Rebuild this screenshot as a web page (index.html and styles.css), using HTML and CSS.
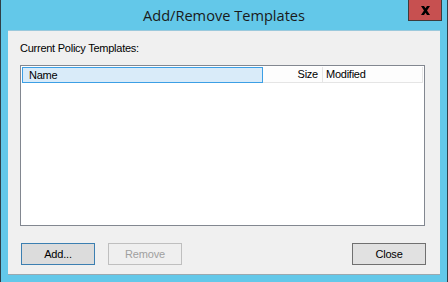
FILE: index.html
```html
<!DOCTYPE html>
<html>
<head>
<meta charset="utf-8">
<link rel="stylesheet" href="styles.css">
</head>
<body>
<div class="window">
  <div class="titlebar">
    <span></span>
    <div class="title">Add/Remove Templates</div>
    <div class="close"><svg width="11" height="9" viewBox="0 0 11 9"><path d="M1 0h3l1.5 2.2L7 0h3L7 4.5 10 9H7L5.5 6.8 4 9H1l3-4.5z" fill="#000"/></svg></div>
  </div>
  <div class="client">
    <div class="label">Current Policy Templates:</div>
    <div class="list">
      <div class="header">
        <div class="col name">Name</div>
        <div class="col size">Size</div>
        <div class="col modified">Modified</div>
        <div class="col rest"></div>
      </div>
    </div>
    <div class="buttons">
      <button class="btn default">Add...</button>
      <button class="btn disabled">Remove</button>
      <span class="spacer"></span>
      <button class="btn close-btn">Close</button>
    </div>
  </div>
</div>
</body>
</html>
```

FILE: styles.css
```css
html, body {
  margin: 0;
  padding: 0;
}
body {
  width: 448px;
  height: 282px;
  overflow: hidden;
  font-family: "Liberation Sans", Arial, sans-serif;
}
.window {
  box-sizing: border-box;
  width: 448px;
  height: 282px;
  background: #63c8e9;
  border-left: 1px solid #2f3f47;
  border-right: 1px solid #2f3f47;
  display: flex;
  flex-direction: column;
}
.titlebar {
  height: 30px;
  display: grid;
  grid-template-columns: 1fr auto 1fr;
  align-items: start;
}
.title {
  font-family: "Open Sans", "Noto Sans", sans-serif;
  font-size: 14.6px;
  line-height: 30px;
  color: #1a1a1a;
}
.close {
  justify-self: end;
  margin-right: 5px;
  width: 32px;
  height: 20px;
  background: #c75050;
  border: 1px solid #3c3c3c;
  border-top: none;
  display: flex;
  align-items: center;
  justify-content: center;
}
.client {
  margin: 0 7px;
  height: 245px;
  background: #f0f0f0;
  border-top: 1px solid #9bc9dc;
  border-bottom: 1px solid #9aa9b0;
  box-sizing: border-box;
  padding: 11px 15px 9px 12px;
  display: flex;
  flex-direction: column;
}
.label {
  font-size: 11px;
  line-height: 13px;
  letter-spacing: -0.25px;
  color: #000;
}
.list {
  margin-top: 10px;
  height: 162px;
  box-sizing: border-box;
  background: #fff;
  border: 1px solid #828790;
  padding: 1px;
}
.header {
  display: flex;
  height: 16px;
}
.col {
  box-sizing: border-box;
  font-size: 11px;
  line-height: 14px;
  letter-spacing: -0.25px;
  color: #000;
  background: #fdfdfd;
  border-right: 1px solid #e5e5e5;
  border-bottom: 1px solid #e5e5e5;
  padding: 0 6px;
}
.col.name {
  width: 241px;
  background: #d9ebf9;
  border: 1px solid #3c9fe5;
}
.col.size {
  width: 60px;
  text-align: right;
  padding-right: 4px;
}
.col.modified {
  width: 100px;
  padding-left: 3px;
}
.col.rest {
  flex: 1;
  border-right: none;
  padding: 0;
}
.buttons {
  margin-top: 17px;
  display: flex;
  gap: 13px;
  height: 22px;
}
.spacer {
  flex: 1;
}
.btn {
  box-sizing: border-box;
  width: 74px;
  height: 22px;
  margin: 0;
  padding: 0;
  font-family: "Liberation Sans", Arial, sans-serif;
  font-size: 11px;
  letter-spacing: -0.2px;
  color: #000;
  background: #e1e1e1;
  border: 1px solid #adadad;
  border-radius: 0;
}
.btn.default {
  margin-left: 1px;
  border-color: #3c7fb1;
  background: #dcdcdc;
}
.btn.disabled {
  color: #a0a0a0;
  background: #efefef;
  border-color: #bfbfbf;
}
.btn.close-btn {
  border-color: #707070;
  margin-right: -1px;
}
```
